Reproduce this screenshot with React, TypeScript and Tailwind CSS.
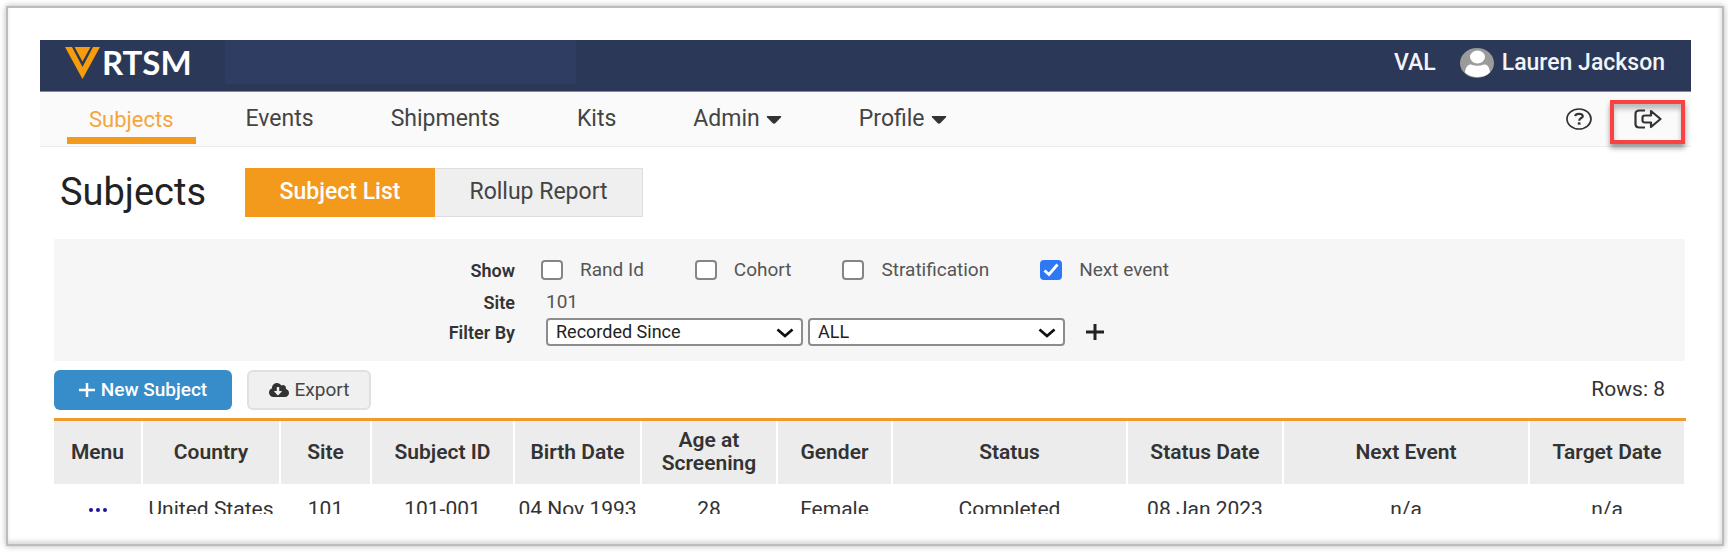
import { FaCloudDownloadAlt } from 'react-icons/fa';

type Column = {
  name: string;
  width: string;
};

const navItems = [
  { name: 'Subjects', active: true },
  { name: 'Events' },
  { name: 'Shipments' },
  { name: 'Kits' },
  { name: 'Admin', menu: true },
  { name: 'Profile', menu: true },
];

const showOptions = [
  { id: 'rand-id', name: 'Rand Id', checked: false },
  { id: 'cohort', name: 'Cohort', checked: false },
  { id: 'stratification', name: 'Stratification', checked: false },
  { id: 'next-event', name: 'Next event', checked: true },
];

const columns: Column[] = [
  { name: 'Menu', width: 'w-[88px]' },
  { name: 'Country', width: 'w-[138px]' },
  { name: 'Site', width: 'w-[91px]' },
  { name: 'Subject ID', width: 'w-[143px]' },
  { name: 'Birth Date', width: 'w-[127px]' },
  { name: 'Age at Screening', width: 'w-[136px]' },
  { name: 'Gender', width: 'w-[115px]' },
  { name: 'Status', width: 'w-[235px]' },
  { name: 'Status Date', width: 'w-[156px]' },
  { name: 'Next Event', width: 'w-[246px]' },
  { name: 'Target Date', width: 'w-[156px]' },
];

const subjects = [
  ['United States', '101', '101-001', '04 Nov 1993', '28', 'Female', 'Completed', '08 Jan 2023', 'n/a', 'n/a'],
];

function Logo() {
  return (
    <a href="#" className="flex items-start gap-[2px] text-white">
      <svg viewBox="0 0 35 32" className="h-8 w-[35px] shrink-0" fill="#f79c0d" aria-hidden="true">
        <path d="M0 0H7L17.500 20L28 0H35L17.500 32Z" />
        <path d="M9.500 0H25.500L17.500 14.500Z" />
      </svg>
      <span className="font-['Lato',sans-serif] text-[33px] leading-[30px] font-bold">RTSM</span>
    </a>
  );
}

function Avatar() {
  return (
    <svg viewBox="0 0 34 30" className="h-[30px] w-[34px]" aria-hidden="true">
      <ellipse cx="17" cy="15" rx="17" ry="15" fill="#9b9b9b" />
      <ellipse cx="17.500" cy="9" rx="7.500" ry="6.500" fill="#fff" />
      <path d="M5 24.500C5.500 19 8 16.500 11 16.500Q17.500 19 24 16.500C27.500 16.500 29.500 19 30 24.500Q25 29 17.500 29T5 24.500Z" fill="#fff" />
    </svg>
  );
}

function Header() {
  return (
    <header className="flex h-[52px] items-start justify-between border-b border-[#8089a3] bg-[#2b3858] pr-[26px] pl-[25px]">
      <div className="flex">
        <div className="flex w-40 pt-[7px]">
          <Logo />
        </div>
        <div className="h-11 w-[351px] bg-[#303d62]" />
      </div>
      <div className="flex items-center gap-6 pt-2 text-[23px] leading-[30px] font-medium text-[#f3f4f7]">
        <span>VAL</span>
        <div className="flex items-center gap-2">
          <Avatar />
          <span>Lauren Jackson</span>
        </div>
      </div>
    </header>
  );
}

function Nav() {
  return (
    <nav className="flex h-[55px] items-start justify-between border-b border-[#ececec] bg-[#fafafa] pr-[6px] pl-[27px]">
      <div className="flex gap-[23px]">
        {navItems.map((item) => (
          <a
            key={item.name}
            href="#"
            className={
              item.active
                ? 'flex h-[52px] items-center border-b-[7px] border-[#f39a1d] px-[22px] pt-[10px] text-[22px] text-[#f5a540]'
                : 'flex h-[52px] items-center border-b-[7px] border-transparent px-[27px] pt-[10px] text-[23px] text-[#444]'
            }
          >
            {item.name}
            {item.menu && (
              <svg viewBox="0 0 16 8" className="ml-[6px] h-2 w-4" fill="#333" aria-hidden="true">
                <path d="M1.500 0H14.500Q16 0 15 1.200L9.500 7Q8 8.500 6.500 7L1 1.200Q0 0 1.500 0Z" />
              </svg>
            )}
          </a>
        ))}
      </div>
      <div className="flex items-start gap-[18px] pt-2">
        <button type="button" aria-label="Help" className="mt-2">
          <svg viewBox="0 0 26 22" className="h-[22px] w-[26px]" fill="none" stroke="#333" aria-hidden="true">
            <ellipse cx="13" cy="11" rx="12" ry="10" strokeWidth="1.700" />
            <path d="M9.200 8.200Q9.500 5.800 13 5.800T16.800 8.200C16.800 10.200 13.200 10 13.200 12.700" strokeWidth="2.200" />
            <path d="M11.800 15.500H14.500" strokeWidth="2.400" />
          </svg>
        </button>
        <button
          type="button"
          aria-label="Log out"
          className="flex h-11 w-[75px] justify-center border-4 border-[#fb4144] pt-[5px] shadow-[0_4px_5px_rgba(0,0,0,0.4),inset_0_5px_5px_rgba(0,0,0,0.25)]"
        >
          <svg viewBox="0 0 28 20" className="h-5 w-7" fill="none" stroke="#333" strokeWidth="2.200" strokeLinejoin="round" aria-hidden="true">
            <path d="M11 1.500H5.500Q1.500 1.500 1.500 5V15Q1.500 18.500 5.500 18.500H11" />
            <path d="M11 6.500H17V2L26.500 10L17 18V13.500H11Q8.500 13.500 8.500 11.500V8.500Q8.500 6.500 11 6.500Z" />
          </svg>
        </button>
      </div>
    </nav>
  );
}

function FilterSelect({ label, value }: { label: string; value: string }) {
  return (
    <div className="relative w-[257px]">
      <select
        aria-label={label}
        defaultValue={value}
        className="h-7 w-full appearance-none rounded-[4px] border-2 border-[#8c8c8c] bg-white px-2 text-[18px] leading-6 text-[#222]"
      >
        <option>{value}</option>
      </select>
      <svg viewBox="0 0 18 10" className="pointer-events-none absolute top-[10px] right-[9px] h-[10px] w-[18px]" fill="none" stroke="#111" strokeWidth="2.800" aria-hidden="true">
        <path d="M1.500 1.500L9 8L16.500 1.500" />
      </svg>
    </div>
  );
}

function Filters() {
  return (
    <section className="bg-[#f6f6f6] pt-[17px] pb-[15px] pl-[360px] text-[19px] text-[#555]">
      <div className="flex h-7 items-center">
        <span className="w-[101px] text-right text-[18px] font-semibold text-[#333]">Show</span>
        <div className="ml-[26px] flex gap-[51px]">
          {showOptions.map((option) => (
            <div key={option.id} className="flex items-center gap-[17px]">
              <span className="relative flex">
                <input
                  id={option.id}
                  type="checkbox"
                  defaultChecked={option.checked}
                  className="peer h-5 w-[22px] appearance-none rounded-[4px] border-2 border-[#858585] bg-white checked:border-[#2f78f5] checked:bg-[#2f78f5]"
                />
                <svg viewBox="0 0 22 20" className="pointer-events-none absolute inset-0 hidden peer-checked:block" fill="none" stroke="#fff" strokeWidth="2.800" aria-hidden="true">
                  <path d="M4.500 10.500L9 14.500L17.500 4.500" />
                </svg>
              </span>
              <label htmlFor={option.id}>{option.name}</label>
            </div>
          ))}
        </div>
      </div>
      <div className="mt-1 flex h-7 items-center">
        <span className="w-[101px] text-right text-[18px] font-semibold text-[#333]">Site</span>
        <span className="ml-[31px]">101</span>
      </div>
      <div className="mt-[2px] flex h-7 items-center">
        <span className="w-[101px] text-right text-[18px] font-semibold text-[#333]">Filter By</span>
        <div className="ml-[31px] flex gap-[5px]">
          <FilterSelect label="Filter field" value="Recorded Since" />
          <FilterSelect label="Filter value" value="ALL" />
        </div>
        <button type="button" aria-label="Add filter" className="ml-[21px]">
          <svg viewBox="0 0 18 16" className="h-4 w-[18px]" stroke="#222" strokeWidth="3" aria-hidden="true">
            <path d="M9 0V16M0 8H18" />
          </svg>
        </button>
      </div>
    </section>
  );
}

function SubjectTable() {
  return (
    <table className="w-full table-fixed border-t-[3px] border-[#ee9a2f] text-center text-[21px] leading-[23px]">
      <thead>
        <tr className="h-16">
          {columns.map((column) => (
            <th
              key={column.name}
              className={`${column.width} border-r-2 border-white bg-[#ececec] font-semibold text-[#333]`}
            >
              {column.name}
            </th>
          ))}
        </tr>
      </thead>
      <tbody>
        {subjects.map((subject) => (
          <tr key={subject[2]} className="h-[52px] text-[#333]">
            <td>
              <button type="button" aria-label="Row menu" className="mx-auto flex">
                <svg viewBox="0 0 20 4" className="h-1 w-5" fill="#1c109c" aria-hidden="true">
                  <circle cx="3" cy="2" r="2" />
                  <circle cx="10" cy="2" r="2" />
                  <circle cx="17" cy="2" r="2" />
                </svg>
              </button>
            </td>
            {subject.map((value, i) => (
              <td key={i} className="whitespace-nowrap">
                {value}
              </td>
            ))}
          </tr>
        ))}
      </tbody>
    </table>
  );
}

export default function App() {
  return (
    <div className="flex h-screen bg-white pt-[6px] pr-1 pb-[6px] pl-[6px] font-['Roboto',sans-serif]">
      <div className="w-full border-2 border-[#bcbcbc] pt-8 pr-[31px] pb-[30px] pl-8 shadow-[0_0_6px_rgba(0,0,0,0.3),inset_-1px_-3px_4px_rgba(0,0,0,0.15)]">
        <div className="h-full overflow-hidden">
          <Header />
          <Nav />
          <main className="pr-[6px] pl-[14px]">
            <div className="flex items-center pt-[21px] pl-[6px]">
              <h1 className="w-[185px] text-[38px] leading-[49px] text-[#222]">Subjects</h1>
              <button type="button" className="h-[49px] w-[190px] bg-[#f39a1d] text-[23px] font-medium text-white">
                Subject List
              </button>
              <button type="button" className="h-[49px] w-52 border border-l-0 border-[#dedede] bg-[#efefef] text-[23px] text-[#444]">
                Rollup Report
              </button>
            </div>
            <div className="mt-[22px]">
              <Filters />
            </div>
            <div className="flex items-center pt-[9px] pb-2">
              <button
                type="button"
                className="flex h-10 w-[178px] items-center justify-center gap-[6px] rounded-md bg-[#368dca] text-[19px] font-medium text-white"
              >
                <svg viewBox="0 0 16 14" className="h-[14px] w-4" stroke="#fff" strokeWidth="2.500" aria-hidden="true">
                  <path d="M8 0V14M0 7H16" />
                </svg>
                New Subject
              </button>
              <button
                type="button"
                className="ml-[15px] flex h-10 w-[124px] items-center justify-center gap-[6px] rounded-md border-2 border-[#e0e0e0] bg-[#f0f0f0] text-[19px] text-[#444]"
              >
                <FaCloudDownloadAlt className="size-5 text-[#333]" />
                Export
              </button>
              <span className="ml-auto pr-5 text-[21px] text-[#333]">Rows: 8</span>
            </div>
            <SubjectTable />
          </main>
        </div>
      </div>
    </div>
  );
}
